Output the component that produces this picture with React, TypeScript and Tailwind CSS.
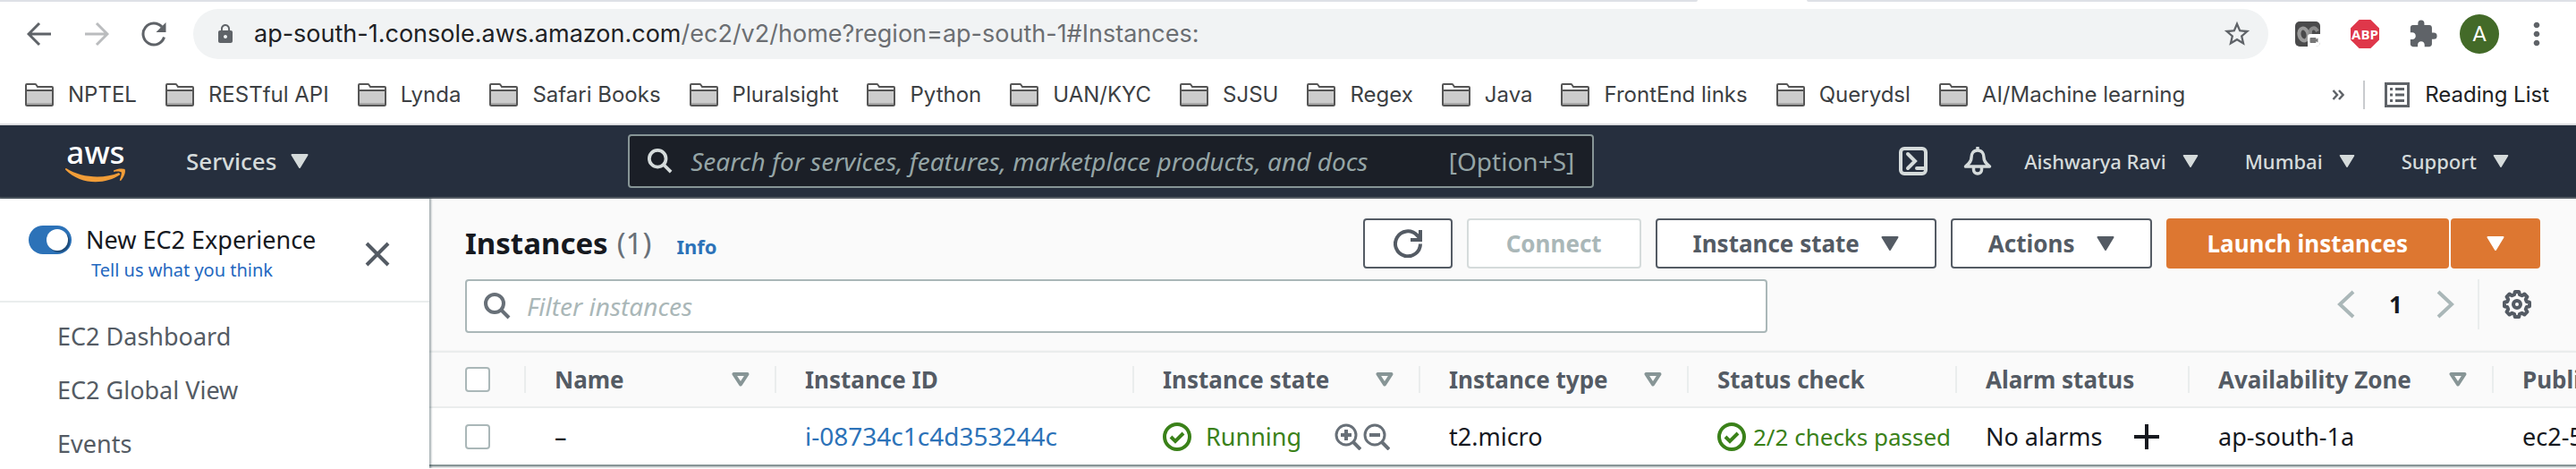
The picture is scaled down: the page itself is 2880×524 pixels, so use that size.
import React from "react";
import {
  MdExtension,
  MdLock,
  MdMoreVert,
  MdStarBorder,
} from "react-icons/md";

const bookmarks = [
  "NPTEL",
  "RESTful API",
  "Lynda",
  "Safari Books",
  "Pluralsight",
  "Python",
  "UAN/KYC",
  "SJSU",
  "Regex",
  "Java",
  "FrontEnd links",
  "Querydsl",
  "AI/Machine learning",
];

function FolderIcon() {
  return (
    <svg viewBox="0 0 32 26" className="h-[26px] w-8 shrink-0" aria-hidden="true">
      <path d="M1 25V2q0-1 1-1h9q1 0 1.500.8L14 4h16q1 0 1 1v20z" fill="#fff" />
      <path d="M1 9h30v15H1z" fill="#ccc" />
      <path d="M2 22h28v2H2z" fill="#a8a8a8" />
      <path
        d="M1 8V2q0-1 1-1h9q1 0 1.500.8L14 4h16q1 0 1 1v18.500q0 1.500-1.500 1.500h-27Q1 25 1 23.500V8h30"
        fill="none"
        stroke="#555"
        strokeWidth="2"
      />
    </svg>
  );
}

function Caret({ className }: { className: string }) {
  return (
    <svg viewBox="0 0 20 16" className={className} aria-hidden="true">
      <path
        d="M1.500 1h17L10 15z"
        fill="currentColor"
        stroke="currentColor"
        strokeWidth="2"
        strokeLinejoin="round"
      />
    </svg>
  );
}

function SortIcon() {
  return (
    <svg viewBox="0 0 20 16" className="h-4 w-5 shrink-0 text-[#879596]" aria-hidden="true">
      <path
        d="M2.500 2h15L10 13.500z"
        fill="none"
        stroke="currentColor"
        strokeWidth="4"
        strokeLinejoin="round"
      />
    </svg>
  );
}

function SearchIcon({ className }: { className: string }) {
  return (
    <svg viewBox="0 0 30 30" className={className} aria-hidden="true">
      <g fill="none" stroke="currentColor" strokeWidth="4">
        <circle cx="12" cy="12" r="10" />
        <path d="M19 19l9 9" />
      </g>
    </svg>
  );
}

function CheckIcon() {
  return (
    <svg viewBox="0 0 32 32" className="size-8 shrink-0" aria-hidden="true">
      <g fill="none" stroke="#3a8119" strokeWidth="4">
        <circle cx="16" cy="16" r="14" />
        <path d="M9 16l5 5 9-9" />
      </g>
    </svg>
  );
}

function ZoomGlyph({ plus }: { plus?: boolean }) {
  return (
    <svg viewBox="0 0 30 30" className="h-[30px] w-[30px]" aria-hidden="true">
      <g fill="none" stroke="#687078" strokeWidth="3">
        <circle cx="13" cy="13" r="11" />
        <path d="M21 21l8 8" strokeWidth="4" />
        <path d="M7 13h12" strokeWidth="4" />
        {plus && <path d="M13 7v12" strokeWidth="4" />}
      </g>
    </svg>
  );
}

function Toolbar() {
  return (
    <div className="flex h-16 items-center pr-6 pl-6 text-[#5f6368]">
      <button aria-label="Back" className="flex size-10 items-center justify-center">
        <svg viewBox="0 0 28 28" className="size-7">
          <path d="M27 14H3M14 2L2 14l12 12" fill="none" stroke="#5f6368" strokeWidth="3" />
        </svg>
      </button>
      <button aria-label="Forward" className="ml-6 flex size-10 items-center justify-center">
        <svg viewBox="0 0 28 28" className="size-7">
          <path d="M1 14h24M14 2l12 12-12 12" fill="none" stroke="#babcbe" strokeWidth="3" />
        </svg>
      </button>
      <button aria-label="Reload" className="ml-6 flex size-10 items-center justify-center">
        <svg viewBox="0 0 28 28" className="size-7">
          <path
            d="M25.500 17.500A12 12 0 1 1 23 6"
            fill="none"
            stroke="#5f6368"
            strokeWidth="3"
          />
          <path d="M27.500 1v11h-11z" fill="#5f6368" />
        </svg>
      </button>
      <div className="ml-6 flex h-14 min-w-0 flex-1 items-center rounded-full bg-[#f1f3f4] pr-[18px] pl-6">
        <MdLock className="size-6 shrink-0" />
        <div className="ml-5 min-w-0 flex-1 truncate font-[Inter,sans-serif] text-[27px] leading-9 text-[#6b6e72]">
          <span className="text-[#202124]">ap-south-1.console.aws.amazon.com</span>
          /ec2/v2/home?region=ap-south-1#Instances:
        </div>
        <button aria-label="Bookmark this page">
          <MdStarBorder className="size-[34px]" />
        </button>
      </div>
      <button aria-label="Screen capture extension" className="ml-[30px]">
        <svg viewBox="0 0 28 28" className="size-7">
          <rect width="28" height="28" rx="5" fill="#4a4a4b" />
          <ellipse cx="9.500" cy="14.500" rx="5" ry="7" fill="none" stroke="#9b9b9b" strokeWidth="4" transform="rotate(-12 9.500 14.500)" />
          <path d="M25 11c-3-6-9-4-8 3" fill="none" stroke="#8a8a8a" strokeWidth="4" />
          <path d="M14 17q0-3 3-3h11v9q0 5-5 5h-9z" fill="#fff" />
          <path d="M16.500 19q0-1 1-1h5q1 0 1 1v1l2-1.500v5l-2-1.500v1q0 1-1 1h-5q-1 0-1-1z" fill="#777" />
        </svg>
      </button>
      <button
        aria-label="Adblock Plus"
        className="ml-[34px] flex size-8 items-center justify-center bg-[#df374a] font-['Open_Sans',sans-serif] text-[15px] leading-none font-bold text-white [clip-path:polygon(30%_0,70%_0,100%_30%,100%_70%,70%_100%,30%_100%,0_70%,0_30%)]"
      >
        ABP
      </button>
      <button aria-label="Extensions" className="ml-8">
        <MdExtension className="size-[34px]" />
      </button>
      <button
        aria-label="Profile"
        className="ml-6 flex size-11 items-center justify-center rounded-full bg-[#436a28] font-[Roboto,sans-serif] text-[24px] leading-none text-white"
      >
        A
      </button>
      <button aria-label="More" className="ml-[22px]">
        <MdMoreVert className="size-10" />
      </button>
    </div>
  );
}

function BookmarksBar() {
  return (
    <nav
      aria-label="Bookmarks"
      className="flex h-16 items-center pr-[30px] pl-7 font-[Inter,sans-serif] text-[24px] leading-8 text-[#3c4043]"
    >
      <div className="flex min-w-0 flex-1 gap-8 overflow-hidden">
        {bookmarks.map((name) => (
          <a key={name} href="#" className="flex items-center gap-4 whitespace-nowrap">
            <FolderIcon />
            {name}
          </a>
        ))}
      </div>
      <button aria-label="More bookmarks" className="mr-[21px]">
        <svg viewBox="0 0 14 12" className="h-3 w-[14px]">
          <path d="M1.500 1l4.500 5-4.500 5M8 1l4.500 5L8 11" fill="none" stroke="#5f6368" strokeWidth="2.500" />
        </svg>
      </button>
      <div className="h-8 w-0.5 bg-[#c9cbce]" />
      <button className="ml-[22px] flex items-center gap-[17px] text-[#202124]">
        <svg viewBox="0 0 28 28" className="size-7" aria-hidden="true">
          <path d="M1.500 1.500h25v25h-25z" fill="none" stroke="#5f6368" strokeWidth="3" />
          <path
            d="M6 7.500h3M12 7.500h10M6 14h3M12 14h10M6 20.500h3M12 20.500h10"
            stroke="#5f6368"
            strokeWidth="3"
          />
        </svg>
        Reading List
      </button>
    </nav>
  );
}

function HeaderMenu({ label }: { label: string }) {
  return (
    <button className="flex items-center gap-[18px] text-[22px] leading-8 font-medium whitespace-nowrap">
      {label}
      <Caret className="h-[14px] w-[18px]" />
    </button>
  );
}

function ConsoleHeader() {
  return (
    <header className="flex h-[84px] items-center border-y-2 border-t-[#dcdcdf] border-b-[#545b64] bg-[#262f3e] pr-[75px] pl-[73px] text-[#d5dbdb]">
      <a href="#" aria-label="AWS home" className="flex w-[68px] flex-col items-center">
        <span className="text-[35px] leading-[28px] font-medium text-white">aws</span>
        <svg viewBox="0 0 68 16" className="mt-1 h-4 w-[68px]" aria-hidden="true">
          <path d="M1 0c17 11 42 12 59 5l1.500 2C45 18.500 17 19 .3 1.800-.2.800.2-.3 1 0z" fill="#f19d38" />
          <path d="M54 2.500C58 0 64 0 66.500 1 68 4 65.500 10 62 14l-1.200-.6C62 10 63.500 5.500 62.500 4.300 61 3.200 57 3.500 54.200 3.900z" fill="#f19d38" />
        </svg>
      </a>
      <button className="ml-[67px] flex items-center gap-4 text-[26px] leading-8 font-medium">
        Services
        <Caret className="h-4 w-5" />
      </button>
      <div className="flex flex-1 justify-center pl-4">
        <div className="flex h-[60px] w-full max-w-[1080px] items-center rounded-sm border-2 border-[#879596] bg-[#1b1f27] px-5">
          <SearchIcon className="size-7 shrink-0" />
          <input
            type="search"
            aria-label="Search"
            placeholder="Search for services, features, marketplace products, and docs"
            className="ml-5 min-w-0 flex-1 bg-transparent text-[28px] leading-9 outline-none placeholder:text-[#95a5a6] placeholder:italic"
          />
          <span className="text-[28px] leading-8 text-[#95a5a6]">[Option+S]</span>
        </div>
      </div>
      <button aria-label="CloudShell">
        <svg viewBox="0 0 32 32" className="size-8">
          <g fill="none" stroke="currentColor" strokeWidth="4" strokeLinecap="round">
            <rect x="2" y="2" width="28" height="28" rx="4" />
            <path d="M10 8l8 8-8 8M20 24h9" />
          </g>
        </svg>
      </button>
      <button aria-label="Notifications" className="ml-10">
        <svg viewBox="0 0 32 32" className="size-8">
          <g fill="none" stroke="currentColor" strokeWidth="3.500" strokeLinejoin="round">
            <path d="M16 4c-5 0-7 4-7 8 0 5-3 7-6.500 10h27C26 19 23 17 23 12c0-4-2-8-7-8zM16 0v4" />
            <path d="M11.500 23v2.500a4.500 4.500 0 0 0 9 0V23" />
          </g>
        </svg>
      </button>
      <div className="ml-9 flex gap-[52px]">
        <HeaderMenu label="Aishwarya Ravi" />
        <HeaderMenu label="Mumbai" />
        <HeaderMenu label="Support" />
      </div>
    </header>
  );
}

function Sidebar() {
  return (
    <aside className="relative z-10 w-[480px] shrink-0 bg-white shadow-[1px_0_2px_1px_rgba(0,28,36,0.35)]">
      <div className="flex h-[116px] items-start justify-between border-b-2 border-[#eaeded] pr-11 pl-8">
        <div className="pt-7">
          <div className="flex items-center text-[27px] leading-9 text-[#16191f]">
            <button
              id="new-experience"
              role="switch"
              aria-checked="true"
              className="flex h-8 w-12 items-center justify-end rounded-full bg-[#2c72b8] p-1"
            >
              <span className="size-6 rounded-full bg-white shadow-[2px_2px_1px_rgba(0,0,0,0.35)]" />
            </button>
            <label htmlFor="new-experience" className="pl-4">
              New EC2 Experience
            </label>
          </div>
          <a href="#" className="block pl-[70px] text-[20px] leading-8 text-[#2468c0]">
            Tell us what you think
          </a>
        </div>
        <button aria-label="Close" className="mt-[48px]">
          <svg viewBox="0 0 28 28" className="size-7">
            <path d="M2 2l24 24M26 2L2 26" stroke="#545b64" strokeWidth="4" />
          </svg>
        </button>
      </div>
      <nav
        aria-label="EC2"
        className="flex flex-col gap-6 pt-5 pl-16 text-[27px] leading-9 text-[#545b64]"
      >
        <a href="#">EC2 Dashboard</a>
        <a href="#">EC2 Global View</a>
        <a href="#">Events</a>
      </nav>
    </aside>
  );
}

const outlineButton =
  "flex h-14 items-center rounded-sm border-2 border-[#545b64] bg-white text-[#545b64]";

function ActionBar() {
  return (
    <div className="flex h-14 items-center justify-between">
      <h1 className="flex items-baseline text-[33px] leading-10 font-bold text-[#16191f]">
        Instances
        <span className="ml-[10px] font-normal text-[#687078]">(1)</span>
        <a href="#" className="ml-7 text-[22px] leading-8 text-[#2c72b8]">
          Info
        </a>
      </h1>
      <div className="flex gap-4 text-[26px] leading-8 font-bold whitespace-nowrap">
        <button aria-label="Refresh" className={`${outlineButton} w-[100px] justify-center`}>
          <svg viewBox="0 0 32 32" className="size-8">
            <g fill="none" stroke="currentColor" strokeWidth="4">
              <path d="M30 16.500A14 14 0 1 1 26 6.500l3 3" />
              <path d="M30 1v11H19" />
            </g>
          </svg>
        </button>
        <button
          disabled
          className="flex h-14 items-center rounded-sm border-2 border-[#d5dbdb] bg-white px-[42px] text-[#aab7b8]"
        >
          Connect
        </button>
        <button className={`${outlineButton} gap-6 px-10`}>
          Instance state
          <Caret className="h-4 w-5" />
        </button>
        <button className={`${outlineButton} gap-6 px-10`}>
          Actions
          <Caret className="h-4 w-5" />
        </button>
        <div className="flex gap-0.5 text-white">
          <button className="h-14 rounded-sm bg-[#dd7731] px-[46px]">Launch instances</button>
          <button
            aria-label="More launch options"
            className="flex h-14 w-[100px] items-center justify-center rounded-sm bg-[#dd7731]"
          >
            <Caret className="h-4 w-5" />
          </button>
        </div>
      </div>
    </div>
  );
}

function FilterBar() {
  return (
    <div className="mt-3 flex items-start justify-between gap-8">
      <div className="flex h-[60px] max-w-[1456px] min-w-0 flex-1 items-center rounded-sm border-2 border-[#aab7b8] bg-white px-[19px]">
        <SearchIcon className="size-[30px] shrink-0 text-[#687078]" />
        <input
          type="text"
          aria-label="Filter instances"
          placeholder="Filter instances"
          className="ml-[18px] min-w-0 flex-1 bg-transparent text-[28px] leading-9 outline-none placeholder:text-[#aab7b8] placeholder:italic"
        />
      </div>
      <div className="flex h-14 items-center pr-2.5">
        <button aria-label="Previous page">
          <svg viewBox="0 0 20 32" className="h-8 w-5">
            <path d="M18 2L3 16l15 14" fill="none" stroke="#aab7b8" strokeWidth="4" />
          </svg>
        </button>
        <button className="w-[91px] text-[26px] leading-8 font-bold text-[#16191f]">1</button>
        <button aria-label="Next page">
          <svg viewBox="0 0 20 32" className="h-8 w-5">
            <path d="M2 2l15 14L2 30" fill="none" stroke="#aab7b8" strokeWidth="4" />
          </svg>
        </button>
        <div className="ml-[26px] h-14 w-0.5 bg-[#eaeded]" />
        <button aria-label="Preferences" className="ml-[26px]">
          <svg viewBox="0 0 32 32" className="size-8 text-[#545b64]">
            <g fill="none" stroke="currentColor" strokeLinejoin="round">
              <path
                d="M13.800 2h4.400l.8 3.200 2.500 1 2.900-1.700 3.100 3.100-1.700 2.900 1 2.500 3.200.8v4.400l-3.200.8-1 2.500 1.700 2.900-3.100 3.100-2.900-1.700-2.500 1-.8 3.200h-4.400l-.8-3.200-2.500-1-2.900 1.700-3.100-3.100 1.700-2.900-1-2.500L2 18.200v-4.400l3.200-.8 1-2.500-1.700-2.900 3.100-3.100 2.900 1.700 2.500-1z"
                strokeWidth="4"
              />
              <circle cx="16" cy="16" r="4" strokeWidth="4" />
            </g>
          </svg>
        </button>
      </div>
    </div>
  );
}

function HeadCell({ label, sortable }: { label: string; sortable?: boolean }) {
  return (
    <th scope="col" className="p-0">
      <div className="flex h-[30px] items-center justify-between border-l-2 border-[#eaeded] pr-7 pl-8 whitespace-nowrap">
        {label}
        {sortable && <SortIcon />}
      </div>
    </th>
  );
}

function Box({ label }: { label: string }) {
  return (
    <input
      type="checkbox"
      aria-label={label}
      className="ml-10 block size-7 appearance-none rounded-sm border-2 border-[#aab7b8] bg-white"
    />
  );
}

function InstancesTable() {
  return (
    <div className="mt-5 overflow-hidden border-b-2 border-[#879596] shadow-[0_1px_2px_rgba(0,28,36,0.3)]">
      <table className="w-full min-w-[2398px] table-fixed border-collapse text-left">
        <colgroup>
          <col className="w-[106px]" />
          <col className="w-[280px]" />
          <col className="w-[400px]" />
          <col className="w-[320px]" />
          <col className="w-[300px]" />
          <col className="w-[300px]" />
          <col className="w-[260px]" />
          <col className="w-[340px]" />
          <col />
        </colgroup>
        <thead className="text-[26px] leading-8 text-[#545b64]">
          <tr className="h-[62px] border-y-2 border-[#eaeded]">
            <th scope="col" className="p-0">
              <Box label="Select all instances" />
            </th>
            <HeadCell label="Name" sortable />
            <HeadCell label="Instance ID" />
            <HeadCell label="Instance state" sortable />
            <HeadCell label="Instance type" sortable />
            <HeadCell label="Status check" />
            <HeadCell label="Alarm status" />
            <HeadCell label="Availability Zone" sortable />
            <HeadCell label="Public IPv4 DNS" />
          </tr>
        </thead>
        <tbody className="bg-white text-[27px] leading-9 text-[#16191f]">
          <tr className="h-16 whitespace-nowrap [&>td]:overflow-hidden [&>td]:p-0 [&>td]:pl-[34px]">
            <td className="pl-0!">
              <Box label="Select instance i-08734c1c4d353244c" />
            </td>
            <td>–</td>
            <td>
              <a href="#" className="text-[28px] text-[#2c72b8]">
                i-08734c1c4d353244c
              </a>
            </td>
            <td>
              <div className="flex items-center text-[#3a8119]">
                <CheckIcon />
                <span className="ml-4">Running</span>
                <span className="ml-auto flex gap-0.5 pr-8">
                  <button aria-label="Include in filter">
                    <ZoomGlyph plus />
                  </button>
                  <button aria-label="Exclude from filter">
                    <ZoomGlyph />
                  </button>
                </span>
              </div>
            </td>
            <td>t2.micro</td>
            <td>
              <div className="flex items-center gap-2 text-[26px] text-[#3a8119]">
                <CheckIcon />
                2/2 checks passed
              </div>
            </td>
            <td>
              <div className="flex items-center justify-between pr-8">
                No alarms
                <button aria-label="Add alarm">
                  <svg viewBox="0 0 28 28" className="size-7">
                    <path d="M14 0v28M0 14h28" stroke="#16191f" strokeWidth="4" />
                  </svg>
                </button>
              </div>
            </td>
            <td>ap-south-1a</td>
            <td>ec2-52-66-201-14</td>
          </tr>
        </tbody>
      </table>
    </div>
  );
}

export default function App() {
  return (
    <div className="overflow-hidden bg-white font-['Noto_Sans',sans-serif]">
      <div className="flex h-0.5">
        <div className="h-0.5 w-[1898px] rounded-br-sm bg-[#dee1e6]" />
        <div className="ml-[122px] h-0.5 flex-1 rounded-bl-sm bg-[#dee1e6]" />
      </div>
      <div className="pt-1">
        <Toolbar />
      </div>
      <div className="pt-1">
        <BookmarksBar />
      </div>
      <ConsoleHeader />
      <div className="flex">
        <Sidebar />
        <main className="min-w-0 flex-1 bg-[#fafafa] pt-[22px]">
          <div className="pr-10 pl-10">
            <ActionBar />
            <FilterBar />
          </div>
          <InstancesTable />
          <div className="h-0.5" />
        </main>
      </div>
    </div>
  );
}
